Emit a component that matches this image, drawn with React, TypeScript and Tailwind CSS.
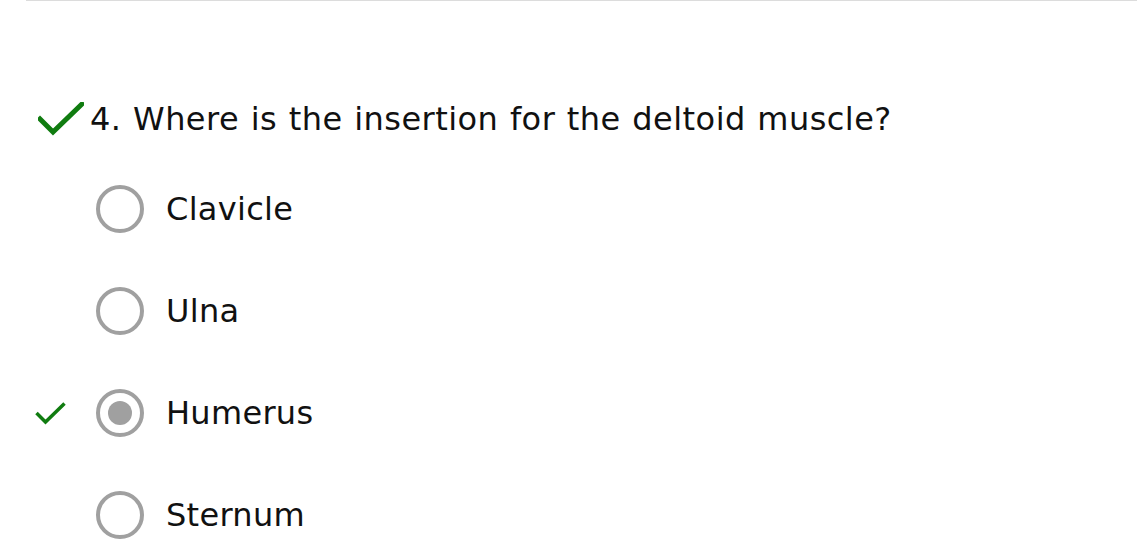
import React from 'react'

const options = [
  { label: 'Clavicle', selected: false, correct: false },
  { label: 'Ulna', selected: false, correct: false },
  { label: 'Humerus', selected: true, correct: true },
  { label: 'Sternum', selected: false, correct: false },
]

function BigCheck() {
  return (
    <svg width="46" height="34" viewBox="0 0 46 34" fill="none" className="shrink-0">
      <polyline points="2,17 15,30 44,2" stroke="#107c10" strokeWidth="5" strokeLinecap="square" />
    </svg>
  )
}

function SmallCheck() {
  return (
    <svg width="31" height="23" viewBox="0 0 31 23" fill="none" className="shrink-0">
      <polyline points="1.5,11 10.5,20 29.5,1.5" stroke="#107c10" strokeWidth="3.5" />
    </svg>
  )
}

export default function App() {
  return (
    <div className="min-h-screen bg-white text-[#111] font-['DejaVu_Sans',Verdana,sans-serif]">
      <div className="ml-[26px] border-t border-[#dcdcdc]" />

      <div className="mt-[86px] flex h-[64px] items-center pl-[38px]">
        <BigCheck />
        <h2 className="ml-[6px] text-[32px] leading-none font-normal tracking-[0.45px] [word-spacing:1px]">
          4. Where is the insertion for the deltoid muscle?
        </h2>
      </div>

      <div className="mt-[7px] flex flex-col">
        {options.map((o) => (
          <label key={o.label} className="flex h-[102px] items-center pl-[35px]">
            <div className="flex w-[31px] items-center">{o.correct && <SmallCheck />}</div>
            <span className="ml-[30px] flex h-[48px] w-[48px] items-center justify-center rounded-full border-[4px] border-[#a0a0a0]">
              {o.selected && <span className="h-[24px] w-[24px] rounded-full bg-[#a0a0a0]" />}
            </span>
            <span className="ml-[22px] text-[32px] leading-none tracking-[0.3px]">{o.label}</span>
          </label>
        ))}
      </div>
    </div>
  )
}
